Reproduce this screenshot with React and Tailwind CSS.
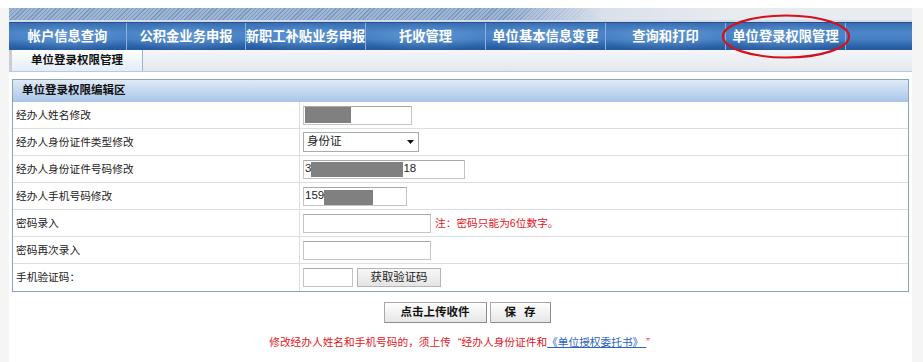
import React from "react";

const FONT = "font-['Liberation_Sans','Noto_Sans_CJK_SC',sans-serif]";

const NAV = [
  { t: "帐户信息查询", w: "w-[118px]" },
  { t: "公积金业务申报", w: "w-[119px]" },
  { t: "新职工补贴业务申报", w: "w-[120px]" },
  { t: "托收管理", w: "w-[120px]" },
  { t: "单位基本信息变更", w: "w-[120px]" },
  { t: "查询和打印", w: "w-[120px]" },
  { t: "单位登录权限管理", w: "w-[120px]" },
];

function Box({ className = "", children }) {
  return (
    <div
      className={`h-[19px] bg-white border border-[#c4c4c4] border-t-[#a8a8a8] flex items-center pl-[1px] text-[11.5px] text-[#222] overflow-hidden ${className}`}
    >
      {children}
    </div>
  );
}

function Row({ label, children, last }) {
  return (
    <div className={`flex h-[27px] ${last ? "" : "border-b border-[#d9dde4]"}`}>
      <div className="w-[287px] border-r border-[#d9dde4] flex items-center pl-[3px] text-[10.7px] text-[#222]">
        {label}
      </div>
      <div className="flex-1 flex items-center pl-[3px] gap-[4px]">{children}</div>
    </div>
  );
}

export default function App() {
  return (
    <div className={`relative w-[923px] h-[362px] overflow-hidden bg-[#f5f5f6] ${FONT}`}>
      <div className="h-[8px] bg-white" />
      <div className="ml-[9px] w-[903px] h-[354px] flex flex-col">
        {/* hatched top band */}
        <div className="h-[12px] bg-[linear-gradient(to_right,rgba(233,236,240,0)_0%,rgba(233,236,240,0)_55%,rgba(226,231,238,0.9)_66%,#e8ebef_80%),repeating-linear-gradient(135deg,#7d98bf_0px,#7d98bf_1px,#9fb5d4_1px,#9fb5d4_3px)]" />
        <div className="h-[2px] bg-[#d3dce8]" />
        {/* nav */}
        <div className="h-[28px] flex border-t border-[#244f8c] bg-[linear-gradient(to_bottom,#3a6fb2_0%,#4c86c8_35%,#4580c3_60%,#2c63a8_85%,#23589c_100%)]">
          {NAV.map((n) => (
            <div
              key={n.t}
              className={`${n.w} h-full flex items-center justify-center border-r border-[#8db1dc] text-white font-bold text-[13.3px] whitespace-nowrap bg-[radial-gradient(ellipse_at_50%_55%,rgba(140,185,235,0.35),rgba(255,255,255,0)_70%)]`}
            >
              {n.t}
            </div>
          ))}
          <div className="flex-1" />
        </div>
        {/* sub tab bar */}
        <div className="h-[21px] flex bg-[linear-gradient(to_bottom,#f4f6f9,#e4e8ee)]">
          <div className="w-[3px] bg-[#c9ced6]" />
          <div className="w-[131px] flex items-center justify-center border-r border-[#9fb3cd] bg-[linear-gradient(to_bottom,#ffffff,#e3ecf7)] font-bold text-[11.5px] text-[#111]">
            单位登录权限管理
          </div>
        </div>
        <div className="h-[1px] bg-[#b6cae4]" />
        {/* content */}
        <div className="flex-1 bg-white px-[3px] pt-[7px]">
          <div className="border border-[#8aa2c0]">
            <div className="h-[22px] flex items-center pl-[9px] bg-[linear-gradient(to_bottom,#dfeaf7,#a9c5e8)] font-bold text-[11.5px] text-[#111]">
              单位登录权限编辑区
            </div>
            <Row label="经办人姓名修改">
              <Box className="w-[109px]">
                <span className="w-[46px] h-[16px] bg-[#808080]" />
              </Box>
            </Row>
            <Row label="经办人身份证件类型修改">
              <div className="w-[116px] h-[20px] bg-white border border-[#aaaaaa] flex items-center justify-between pl-[3px] pr-[4px] text-[11.5px] text-[#222]">
                <span>身份证</span>
                <svg width="7" height="4" viewBox="0 0 7 4">
                  <path d="M0 0 H7 L3.5 4 Z" fill="#111" />
                </svg>
              </div>
            </Row>
            <Row label="经办人身份证件号码修改">
              <Box className="w-[162px]">
                <span>3</span>
                <span className="w-[92px] h-[15px] bg-[#808080] mt-[1px]" />
                <span>18</span>
              </Box>
            </Row>
            <Row label="经办人手机号码修改">
              <Box className="w-[104px] overflow-visible">
                <span>159</span>
                <span className="w-[49px] h-[15px] bg-[#808080] mt-[3px]" />
              </Box>
            </Row>
            <Row label="密码录入">
              <Box className="w-[128px]" />
              <span className="text-[10.7px] text-[#e4151d]">注：密码只能为6位数字。</span>
            </Row>
            <Row label="密码再次录入">
              <Box className="w-[128px]" />
            </Row>
            <Row label="手机验证码：" last>
              <Box className="w-[50px]" />
              <div className="w-[84px] h-[19px] flex items-center justify-center border border-[#b5b5b5] bg-[linear-gradient(to_bottom,#f7f7f7,#e4e4e4)] text-[11.4px] text-[#222]">
                获取验证码
              </div>
            </Row>
          </div>
          <div className="mt-[10px] flex justify-center pl-[13px] gap-[3px]">
            <div className="w-[103px] h-[21px] flex items-center justify-center border border-[#a9a9a9] border-b-[#8c8c8c] border-r-[#8c8c8c] bg-[linear-gradient(to_bottom,#fefefe,#e6e6e6)] font-bold text-[11.5px] text-[#111]">
              点击上传收件
            </div>
            <div className="w-[61px] h-[21px] flex items-center justify-center border border-[#a9a9a9] border-b-[#8c8c8c] border-r-[#8c8c8c] bg-[linear-gradient(to_bottom,#fefefe,#e6e6e6)] font-bold text-[11.5px] text-[#111] [word-spacing:5px]">
              保 存
            </div>
          </div>
          <div className="mt-[12px] flex justify-center pl-[3px] text-[10.7px] leading-[15px] text-[#e4151d] whitespace-nowrap">
            <span>
              修改经办人姓名和手机号码的，须上传
              <span className="inline-block w-[1em] text-right">“</span>
              经办人身份证件和
              <span className="text-[#2a63c4] underline">《单位授权委托书》 </span>
              <span className="inline-block w-[0.8em] text-left">”</span>
            </span>
          </div>
        </div>
      </div>
      {/* red hand-drawn ellipse */}
      <svg className="absolute left-[720px] top-[13px]" width="134" height="48" viewBox="0 0 134 48">
        <ellipse cx="66" cy="23.5" rx="63" ry="21" fill="none" stroke="#d3121c" strokeWidth="2.2" />
      </svg>
    </div>
  );
}
